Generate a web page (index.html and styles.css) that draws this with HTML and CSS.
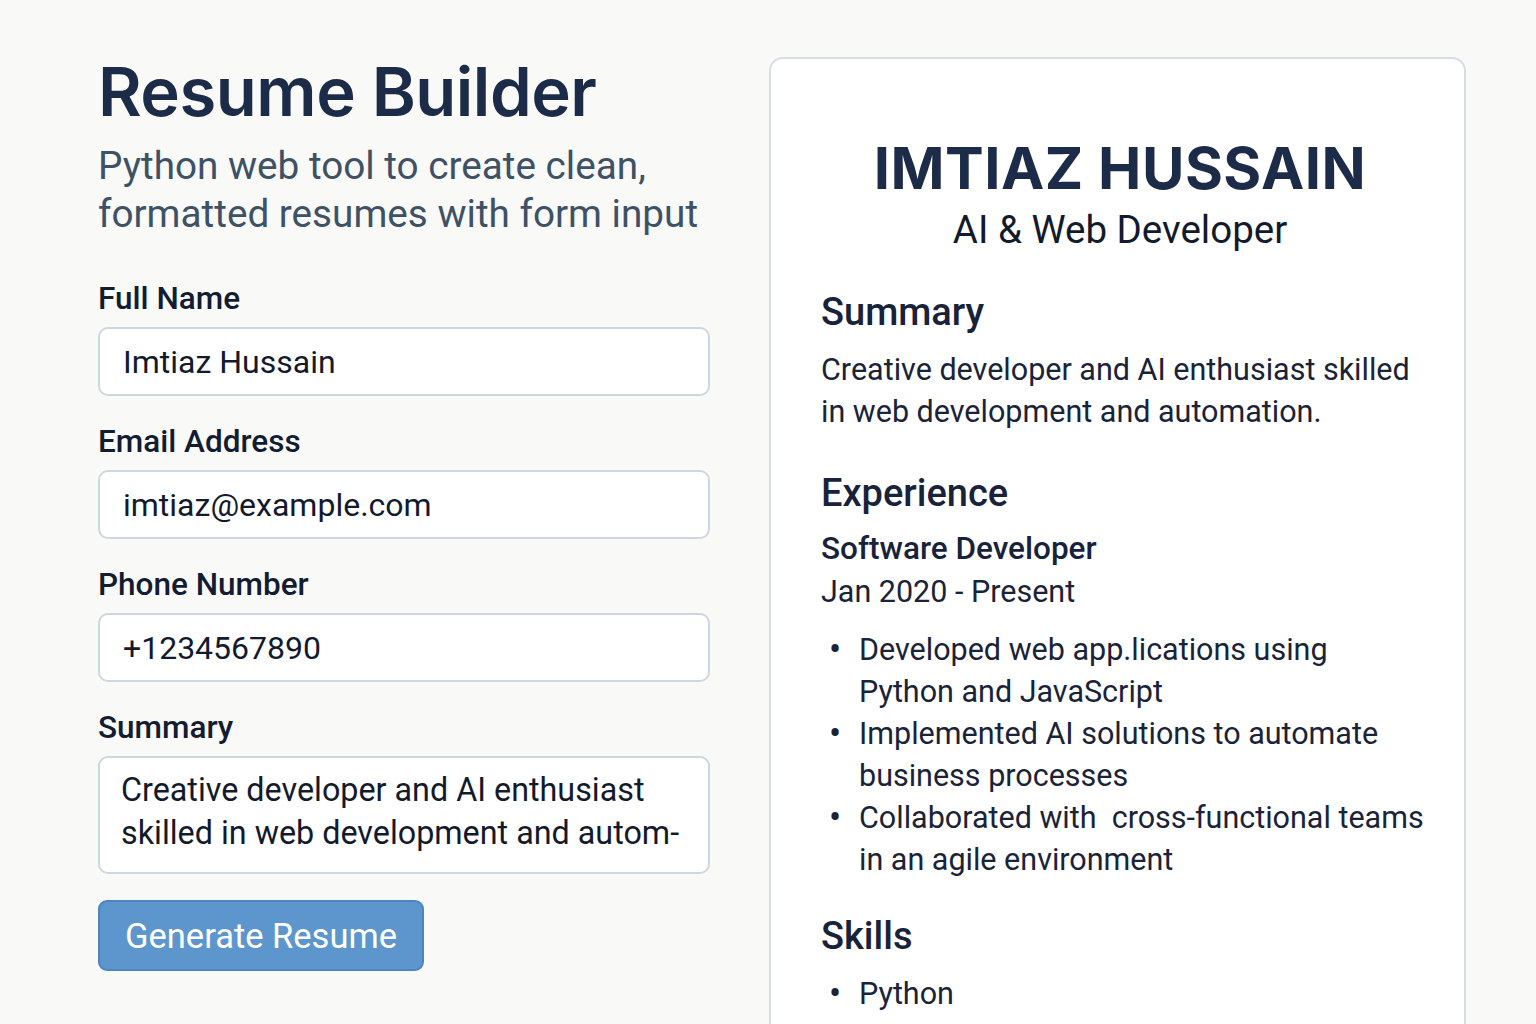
FILE: index.html
```html
<!DOCTYPE html>
<html lang="en">
<head>
<meta charset="utf-8">
<title>Resume Builder</title>
<link rel="stylesheet" href="styles.css">
</head>
<body>
<div class="page">
  <section class="form-col">
    <h1 class="title">Resume Builder</h1>
    <p class="subtitle">Python web tool to create clean, formatted resumes with form input</p>
    <form class="form">
      <div class="field">
        <label class="label">Full Name</label>
        <div class="input">Imtiaz Hussain</div>
      </div>
      <div class="field">
        <label class="label">Email Address</label>
        <div class="input">imtiaz@example.com</div>
      </div>
      <div class="field">
        <label class="label">Phone Number</label>
        <div class="input">+1234567890</div>
      </div>
      <div class="field">
        <label class="label">Summary</label>
        <div class="input textarea">Creative developer and AI enthusiast skilled in web development and autom-</div>
      </div>
      <div class="actions"><button type="button" class="btn">Generate Resume</button></div>
    </form>
  </section>
  <section class="preview">
    <div class="card">
      <h2 class="name">IMTIAZ HUSSAIN</h2>
      <p class="role">AI &amp; Web Developer</p>
      <h3 class="section-h">Summary</h3>
      <p class="text">Creative developer and AI enthusiast skilled in web development and automation.</p>
      <h3 class="section-h exp">Experience</h3>
      <h4 class="job">Software Developer</h4>
      <p class="dates">Jan 2020 - Present</p>
      <ul class="list">
        <li>Developed web app.lications using Python and JavaScript</li>
        <li>Implemented AI solutions to automate business processes</li>
        <li>Collaborated with&nbsp; cross-functional teams in an agile environment</li>
      </ul>
      <h3 class="section-h skills">Skills</h3>
      <ul class="list skills-list">
        <li>Python</li>
        <li>JavaScript</li>
        <li>Flask</li>
      </ul>
    </div>
  </section>
</div>
</body>
</html>
```
FILE: styles.css
```css
html, body {
  margin: 0;
  padding: 0;
  height: 100%;
  overflow: hidden;
}
body {
  background: #f9f9f8;
  font-family: Roboto, "Liberation Sans", sans-serif;
  color: #141c2e;
}
.page {
  display: flex;
  align-items: flex-start;
  padding: 57px 0 0 98px;
  gap: 59px;
}
.form-col {
  width: 612px;
  flex: none;
}
.title {
  margin: 0;
  font-family: Inter, "Liberation Sans", sans-serif;
  font-weight: 600;
  font-size: 67px;
  line-height: 70px;
  letter-spacing: -0.5px;
  color: #1b2b48;
}
.subtitle {
  margin: 15px 0 0;
  font-size: 38.7px;
  line-height: 48px;
  color: #3e5165;
  font-weight: 400;
}
.form {
  margin-top: 43px;
}
.field {
  display: flex;
  flex-direction: column;
}
.field + .field {
  margin-top: 28px;
}
.label {
  font-size: 31.5px;
  line-height: 36px;
  font-weight: 500;
  color: #131c30;
  margin-bottom: 10px;
}
.input {
  box-sizing: border-box;
  height: 69px;
  border: 2px solid #cdd7df;
  border-radius: 10px;
  background: #fff;
  padding: 0 23px;
  display: flex;
  align-items: center;
  font-size: 32px;
  color: #121a2c;
}
.input.textarea {
  height: 118px;
  align-items: flex-start;
  padding: 11px 21px;
  line-height: 43px;
  font-size: 32.3px;
}
.actions {
  margin-top: 26px;
}
.btn {
  box-sizing: border-box;
  width: 326px;
  height: 71px;
  border: 2px solid #4c86c2;
  border-radius: 9px;
  background: #5c96cd;
  color: #fff;
  font-family: Roboto, "Liberation Sans", sans-serif;
  font-size: 34.5px;
  font-weight: 400;
  padding: 0;
}
.preview {
  width: 697px;
  flex: none;
}
.card {
  box-sizing: border-box;
  height: 1100px;
  background: #fff;
  border: 2px solid #d6dee4;
  border-radius: 14px;
  padding: 74px 40px 0 50px;
}
.name {
  margin: 0 0 0 -5px;
  text-align: center;
  font-family: Inter, "Liberation Sans", sans-serif;
  font-weight: 700;
  font-size: 58px;
  line-height: 70px;
  letter-spacing: 0.5px;
  color: #1b2b48;
}
.role {
  margin: 4px 0 0 -5px;
  text-align: center;
  font-size: 38.5px;
  line-height: 46px;
  color: #121a2c;
}
.section-h {
  margin: 37px 0 0;
  font-size: 38px;
  line-height: 44px;
  font-weight: 500;
  color: #18223a;
}
.text {
  margin: 15px 0 0;
  font-size: 30.5px;
  line-height: 42px;
  color: #1a2338;
}
.section-h.exp {
  margin-top: 38px;
}
.job {
  margin: 13px 0 0;
  font-size: 31.5px;
  line-height: 42px;
  font-weight: 500;
  color: #18223a;
}
.dates {
  margin: 0;
  font-size: 30.5px;
  line-height: 44px;
  color: #1a2338;
}
.list {
  list-style: none;
  margin: 15px 0 0;
  padding: 0;
  font-size: 30.5px;
  line-height: 42px;
  color: #1a2338;
}
.list li {
  display: flex;
}
.list li::before {
  content: "•";
  flex: none;
  width: 38px;
  box-sizing: border-box;
  padding-left: 8px;
  font-size: 36px;
  line-height: 42px;
}
.section-h.skills {
  margin-top: 33px;
}
.skills-list {
  margin-top: 15px;
}
```
